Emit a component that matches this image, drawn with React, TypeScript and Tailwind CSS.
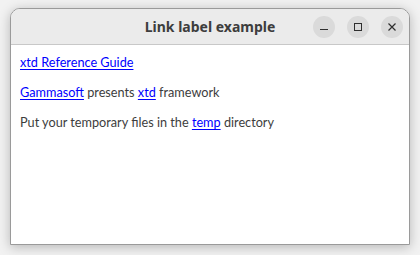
import React from "react";

const Link = ({ children }: { children: React.ReactNode }) => (
  <a className="text-[#0000ff] underline decoration-[#0000ff] underline-offset-[2px] cursor-pointer">{children}</a>
);

export default function App() {
  return (
    <div className="w-[420px] h-[255px] bg-[#f2f2f2] pt-[8px] pl-[10px] overflow-hidden" style={{ fontFamily: 'Lato, "Noto Sans", sans-serif' }}>
      <div className="w-[400px] h-[237px] rounded-t-[10px] border border-[#9a9a9a] bg-white shadow-[0_2px_12px_rgba(0,0,0,0.25)] flex flex-col overflow-hidden">
        <div className="h-[36px] bg-[#ebebeb] border-b border-[#c8c8c8] flex items-center relative">
          <div className="absolute inset-0 flex items-center justify-center text-[14px] font-bold text-[#3d3d3d] font-['Noto_Sans',sans-serif]">Link label example</div>
          <div className="ml-auto mr-[6px] flex gap-[12px] relative">
            <div className="w-[22px] h-[22px] rounded-full bg-[#dadada] flex items-center justify-center">
              <div className="w-[8px] h-[1px] bg-[#2e2e2e] mt-[6px]" />
            </div>
            <div className="w-[22px] h-[22px] rounded-full bg-[#dadada] flex items-center justify-center">
              <div className="w-[8px] h-[8px] border border-[#2e2e2e]" />
            </div>
            <div className="w-[22px] h-[22px] rounded-full bg-[#dadada] flex items-center justify-center">
              <svg width="10" height="10" viewBox="0 0 10 10"><path d="M1.5 1.5L8.5 8.5M8.5 1.5L1.5 8.5" stroke="#2e2e2e" strokeWidth="1.2" /></svg>
            </div>
          </div>
        </div>
        <div className="flex flex-col pl-[9px] pt-[8px] gap-[12px] text-[12.7px] leading-[18px] text-[#3d3d3d]">
          <div><Link>xtd Reference Guide</Link></div>
          <div><Link>Gammasoft</Link> presents <Link>xtd</Link> framework</div>
          <div>Put your temporary files in the <Link>temp</Link> directory</div>
        </div>
      </div>
    </div>
  );
}
